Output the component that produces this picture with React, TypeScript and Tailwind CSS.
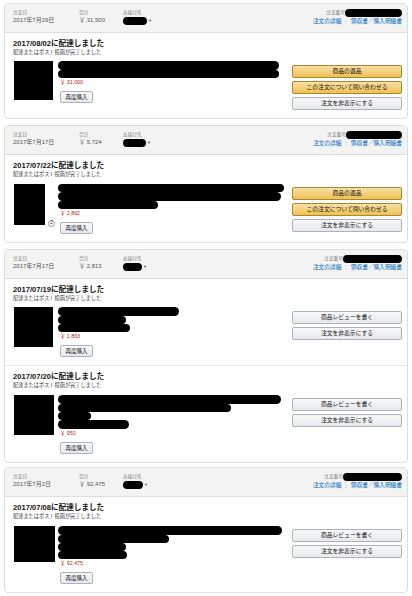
import React from "react";

type Shipment = {
  title: string;
  imgMt: number;
  img: [number, number];
  badge?: string;
  pills: [number, number][];
  price: string;
  kind: "return" | "review";
};

type Order = {
  mt: number;
  date: string;
  total: string;
  addrW: number;
  numW: number;
  shipments: Shipment[];
};

const orders: Order[] = [
  {
    mt: 3,
    date: "2017年7月29日",
    total: "￥ 31,500",
    addrW: 24,
    numW: 57,
    shipments: [
      {
        title: "2017/08/02に配達しました",
        imgMt: 5,
        img: [39, 39],
        pills: [[221, 9], [221, 8]],
        price: "￥ 31,000",
        kind: "return",
      },
    ],
  },
  {
    mt: 6,
    date: "2017年7月17日",
    total: "￥ 5,724",
    addrW: 23,
    numW: 56,
    shipments: [
      {
        title: "2017/07/22に配達しました",
        imgMt: 6,
        img: [31, 41],
        badge: "2",
        pills: [[226, 8], [223, 9], [100, 8]],
        price: "￥ 2,862",
        kind: "return",
      },
    ],
  },
  {
    mt: 6,
    date: "2017年7月17日",
    total: "￥ 2,813",
    addrW: 19,
    numW: 59,
    shipments: [
      {
        title: "2017/07/19に配達しました",
        imgMt: 5,
        img: [39, 40],
        pills: [[121, 9], [68, 8], [72, 8]],
        price: "￥ 1,863",
        kind: "review",
      },
      {
        title: "2017/07/20に配達しました",
        imgMt: 6,
        img: [40, 40],
        pills: [[223, 9], [173, 8], [33, 8], [71, 9]],
        price: "￥ 950",
        kind: "review",
      },
    ],
  },
  {
    mt: 4,
    date: "2017年7月2日",
    total: "￥ 92,475",
    addrW: 20,
    numW: 59,
    shipments: [
      {
        title: "2017/07/08に配達しました",
        imgMt: 6,
        img: [41, 36],
        pills: [[224, 9], [111, 8], [68, 8], [69, 8]],
        price: "￥ 92,475",
        kind: "review",
      },
    ],
  },
];

const yellowBtn =
  "flex h-[13px] w-full items-center justify-center rounded-[2px] border border-[#a88734] bg-linear-to-b from-[#f7dfa5] to-[#f0c14b] text-[5.8px] text-[#111]";
const grayBtn =
  "flex h-[13px] w-full items-center justify-center rounded-[2px] border border-[#adb1b8] bg-linear-to-b from-[#f7f8fa] to-[#e7e9ec] text-[5.8px] text-[#111]";

function Pill({ w, h }: { w: number; h: number }) {
  return <div className="rounded-full bg-black" style={{ width: w, height: h }} />;
}

function OrderHeader({ order }: { order: Order }) {
  return (
    <div className="flex h-[29px] border-b border-[#dddddd] bg-[#f3f3f3] pl-[8px] pr-[5px] pt-[6px]">
      <div className="w-[66px]">
        <div className="text-[4.7px] leading-[6px] text-[#767676]">注文日</div>
        <div className="text-[6px] leading-[8px] text-[#555]">{order.date}</div>
      </div>
      <div className="w-[44px]">
        <div className="text-[4.7px] leading-[6px] text-[#767676]">合計</div>
        <div className="text-[6px] leading-[8px] text-[#555]">{order.total}</div>
      </div>
      <div>
        <div className="text-[4.7px] leading-[6px] text-[#767676]">お届け先</div>
        <div className="mt-[1px] flex items-center gap-[1px]">
          <Pill w={order.addrW} h={8} />
          <span className="text-[4px] leading-none text-[#555]">▼</span>
        </div>
      </div>
      <div className="ml-auto -mt-[1px] flex flex-col items-end">
        <div className="flex h-[8px] items-center">
          <span className="text-[4.7px] leading-[6px] text-[#767676]">注文番号</span>
          <Pill w={order.numW} h={8} />
        </div>
        <div className="text-[5.7px] leading-[8px] text-[#0066c0]">
          注文の詳細
          <span className="mx-[4px] text-[#ccc]">|</span>
          領収書／購入明細書
        </div>
      </div>
    </div>
  );
}

function ShipmentBody({ s, divider }: { s: Shipment; divider: boolean }) {
  return (
    <div className={`flex pb-[8px] pl-[8px] pr-[5px] pt-[5px] ${divider ? "border-t border-[#e7e7e7]" : ""}`}>
      <div className="flex-1">
        <div className="text-[7.6px] font-bold leading-[11px] text-[#111]">{s.title}</div>
        <div className="text-[5.2px] leading-[7px] text-[#333]">配達またはポスト投函が完了しました</div>
        <div className="flex" style={{ marginTop: s.imgMt }}>
          <div className="relative ml-[1px] w-[40px]">
            <div className="bg-black" style={{ width: s.img[0], height: s.img[1] }} />
            {s.badge && (
              <div className="absolute left-[34px] top-[36px] flex h-[7px] w-[7px] items-center justify-center rounded-full border border-[#999] bg-white text-[4.5px] leading-none text-[#333]">
                {s.badge}
              </div>
            )}
          </div>
          <div className="ml-[4px] flex flex-col">
            <div className="flex flex-col">
              {s.pills.map(([w, h], i) => (
                <Pill key={i} w={w} h={h} />
              ))}
            </div>
            <div className="pl-[2px] text-[5.3px] leading-[8px] text-[#b12704]">{s.price}</div>
            <button className="ml-[2px] mt-[5px] flex h-[12px] w-[33px] items-center justify-center rounded-[2px] border border-[#adb1b8] bg-linear-to-b from-[#f7f8fa] to-[#e7e9ec] text-[5.5px] text-[#111]">
              再度購入
            </button>
          </div>
        </div>
      </div>
      <div className="mt-[27px] flex w-[110px] flex-col gap-[3px]">
        {s.kind === "return" ? (
          <>
            <button className={yellowBtn}>商品の返品</button>
            <button className={yellowBtn}>この注文について問い合わせる</button>
            <button className={grayBtn}>注文を非表示にする</button>
          </>
        ) : (
          <>
            <button className={grayBtn}>商品レビューを書く</button>
            <button className={grayBtn}>注文を非表示にする</button>
          </>
        )}
      </div>
    </div>
  );
}

export default function App() {
  return (
    <div className="min-h-[596px] w-[412px] bg-white px-[4px] font-['Liberation_Sans','Noto_Sans_CJK_JP',sans-serif]">
      {orders.map((order, i) => (
        <div
          key={i}
          className="overflow-hidden rounded-[4px] border border-[#dddddd] bg-white"
          style={{ marginTop: order.mt }}
        >
          <OrderHeader order={order} />
          {order.shipments.map((s, j) => (
            <ShipmentBody key={j} s={s} divider={j > 0} />
          ))}
        </div>
      ))}
    </div>
  );
}
